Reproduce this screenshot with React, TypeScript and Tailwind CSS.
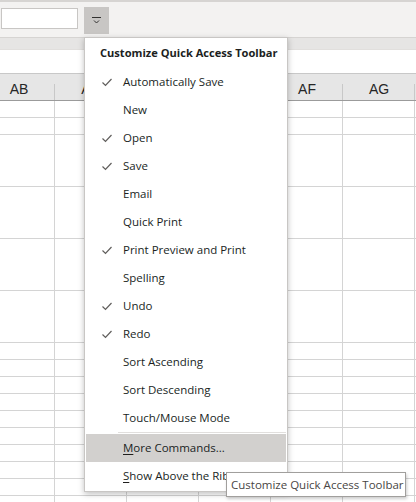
import React from "react";

const FONT = { fontFamily: '"Open Sans", "Noto Sans", sans-serif' };

const items: { label: string; checked: boolean }[] = [
  { label: "Automatically Save", checked: true },
  { label: "New", checked: false },
  { label: "Open", checked: true },
  { label: "Save", checked: true },
  { label: "Email", checked: false },
  { label: "Quick Print", checked: false },
  { label: "Print Preview and Print", checked: true },
  { label: "Spelling", checked: false },
  { label: "Undo", checked: true },
  { label: "Redo", checked: true },
  { label: "Sort Ascending", checked: false },
  { label: "Sort Descending", checked: false },
  { label: "Touch/Mouse Mode", checked: false },
];

const cols = ["AB", "AC", "AD", "AE", "AF", "AG", ""];
const rowHeights = [17, 17, 52, 52, 52, 52, 17, 17, 17, 17, 17, 17, 17, 17, 17, 17];

function Check() {
  return (
    <svg width="10" height="9" viewBox="0 0 10 9" fill="none">
      <path d="M0.5 4.5 L3.5 7.5 L9.5 1" stroke="#605e5c" strokeWidth="1.2" />
    </svg>
  );
}

export default function App() {
  return (
    <div className="relative w-[416px] h-[502px] overflow-hidden bg-white" style={FONT}>
      {/* top border */}
      <div className="h-[2px] bg-[#d6d4d2]" />
      {/* toolbar */}
      <div className="h-[35px] bg-[#f3f2f1] flex items-start">
        <div className="mt-[6px] ml-[1px] w-[77px] h-[21px] bg-white border border-[#c8c6c4]" />
        <div className="mt-[5px] ml-[6px] w-[25px] h-[27px] bg-[#c8c6c4] flex items-center justify-center">
          <svg width="9" height="8" viewBox="0 0 9 8" fill="none">
            <path d="M0 0.5 H9" stroke="#323130" strokeWidth="1" />
            <path d="M2 3.5 L4.5 6 L7 3.5" stroke="#323130" strokeWidth="1" />
          </svg>
        </div>
      </div>
      {/* band */}
      <div className="h-[1px] bg-[#d6d4d2]" />
      <div className="h-[11px] bg-[#e6e5e4]" />
      {/* formula-like white strip */}
      <div className="h-[1px] bg-[#e1dfdd]" />
      <div className="h-[23px] bg-white" />
      <div className="h-[1px] bg-[#c8c8c8]" />
      {/* column headers */}
      <div className="h-[26px] bg-[#e6e6e6] flex ml-[-17px]">
        {cols.map((c, i) => (
          <div key={i} className="w-[72px] shrink-0 relative flex items-end justify-center pb-[2px]">
            <span
              className="text-[14px] leading-[18px] text-[#262626]"
              style={{ fontFamily: '"Liberation Sans", Arial, sans-serif' }}
            >
              {c}
            </span>
            <div className="absolute right-0 top-[10px] bottom-0 w-[1px] bg-[#c8c8c8]" />
          </div>
        ))}
      </div>
      <div className="h-[1px] bg-[#9b9b9b]" />
      {/* grid */}
      <div className="flex flex-col">
        {rowHeights.map((h, i) => (
          <div key={i} className="flex ml-[-17px] border-b border-[#d4d4d4] box-border" style={{ height: h }}>
            {cols.map((c, j) => (
              <div key={j} className="w-[72px] shrink-0 border-r border-[#d4d4d4] box-border" />
            ))}
          </div>
        ))}
      </div>

      {/* dropdown menu */}
      <div className="absolute left-[84px] top-[37px] w-[204px] h-[455px] bg-white border border-[#c8c6c4] shadow-[0_2px_6px_rgba(0,0,0,0.25)] px-[1px] flex flex-col">
        <div className="h-[30px] flex items-center pl-[14px] text-[11.1px] font-bold text-[#201f1e] whitespace-nowrap">
          Customize Quick Access Toolbar
        </div>
        {items.map((it) => (
          <div key={it.label} className="h-[28px] flex items-center text-[11.5px] text-[#201f1e] whitespace-nowrap">
            <div className="w-[37px] pl-[16px] flex items-center">{it.checked ? <Check /> : null}</div>
            <span>{it.label}</span>
          </div>
        ))}
        <div className="h-[2px] flex items-start">
          <div className="ml-[32px] flex-1 h-[1px] bg-[#e1dfdd]" />
        </div>
        <div className="h-[28px] flex items-center text-[11.5px] text-[#201f1e] bg-[#d2d0ce] whitespace-nowrap">
          <div className="w-[37px]" />
          <span>
            <span className="underline underline-offset-2">M</span>ore Commands...
          </span>
        </div>
        <div className="h-[28px] flex items-center text-[11.5px] text-[#201f1e] whitespace-nowrap">
          <div className="w-[37px]" />
          <span>
            <span className="underline underline-offset-2">S</span>how Above the Ribbon
          </span>
        </div>
      </div>

      {/* tooltip */}
      <div className="absolute left-[226px] top-[472px] w-[180px] h-[25px] bg-white border border-[#a19f9d] shadow-[1px_2px_3px_rgba(0,0,0,0.2)] flex items-center pl-[4px] text-[11.5px] text-[#484644] whitespace-nowrap">
        Customize Quick Access Toolbar
      </div>
    </div>
  );
}
